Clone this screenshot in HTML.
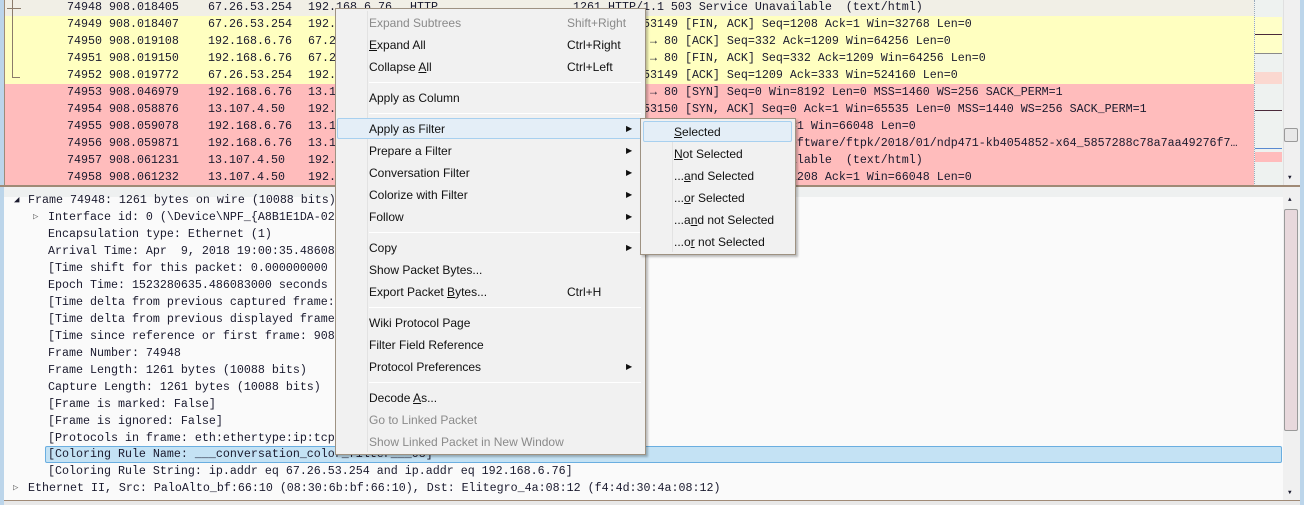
<!DOCTYPE html>
<html><head><meta charset="utf-8"><style>
*{margin:0;padding:0;box-sizing:border-box}
body{width:1304px;height:505px;overflow:hidden;background:#f0f0f0;position:relative;font-family:"Liberation Mono","DejaVu Sans Mono",monospace;font-size:11.67px;color:#1a1a2e}
.abs{position:absolute}
.row{position:absolute;left:5px;width:1249px;height:17px;line-height:17px;white-space:pre}
.row span{position:absolute;top:0}
.y{background:#ffffc0}.r{background:#ffbcbc}.s{background:#f1efe6}
.d{position:absolute;height:17px;line-height:17px;white-space:pre}
.menu{position:absolute;background:#f1f1f1;border:1px solid #9e9282;font-family:"Liberation Sans",sans-serif;font-size:12px;color:#111;box-shadow:2px 2px 2px rgba(0,0,0,.25)}
.mi{position:absolute;left:0;right:0;height:22px;line-height:22px;white-space:nowrap}
.mi .t{position:absolute;left:33px}
.mi .k{position:absolute;left:231px}
.mi .a{position:absolute;left:290px;top:0;font-size:8px}
.dis{color:#8a8a8a}
.sep{position:absolute;left:33px;right:4px;height:1px;background:#dadada;border-bottom:1px solid #fff}
.hl{position:absolute;background:#e4eef7;border:1px solid #a8d0ef;border-radius:2px}
u{text-decoration:underline}
</style></head><body>
<!-- packet list frame -->
<div class="abs" style="left:0;top:0;width:4px;height:505px;background:#bcd5ea"></div>
<div class="abs" style="left:1300px;top:0;width:4px;height:505px;background:#bcd5ea"></div>
<div class="abs" style="left:4px;top:0;width:1px;height:186px;background:#9e8b78"></div>
<div class="row s" style="top:-1px"><span style="left:62px">74948 908.018405</span><span style="left:203px">67.26.53.254</span><span style="left:303px">192.168.6.76</span><span style="left:405px">HTTP</span><span style="left:568px">1261 HTTP/1.1 503 Service Unavailable  (text/html)</span></div>
<div class="row y" style="top:16px"><span style="left:62px">74949 908.018407</span><span style="left:203px">67.26.53.254</span><span style="left:303px">192.168.6.76</span><span style="left:603px">80 → 53149 [FIN, ACK] Seq=1208 Ack=1 Win=32768 Len=0</span></div>
<div class="row y" style="top:33px"><span style="left:62px">74950 908.019108</span><span style="left:203px">192.168.6.76</span><span style="left:303px">67.26.53.254</span><span style="left:603px">53149 → 80 [ACK] Seq=332 Ack=1209 Win=64256 Len=0</span></div>
<div class="row y" style="top:50px"><span style="left:62px">74951 908.019150</span><span style="left:203px">192.168.6.76</span><span style="left:303px">67.26.53.254</span><span style="left:603px">53149 → 80 [FIN, ACK] Seq=332 Ack=1209 Win=64256 Len=0</span></div>
<div class="row y" style="top:67px"><span style="left:62px">74952 908.019772</span><span style="left:203px">67.26.53.254</span><span style="left:303px">192.168.6.76</span><span style="left:603px">80 → 53149 [ACK] Seq=1209 Ack=333 Win=524160 Len=0</span></div>
<div class="row r" style="top:84px"><span style="left:62px">74953 908.046979</span><span style="left:203px">192.168.6.76</span><span style="left:303px">13.107.4.50</span><span style="left:603px">53150 → 80 [SYN] Seq=0 Win=8192 Len=0 MSS=1460 WS=256 SACK_PERM=1</span></div>
<div class="row r" style="top:101px"><span style="left:62px">74954 908.058876</span><span style="left:203px">13.107.4.50</span><span style="left:303px">192.168.6.76</span><span style="left:603px">80 → 53150 [SYN, ACK] Seq=0 Ack=1 Win=65535 Len=0 MSS=1440 WS=256 SACK_PERM=1</span></div>
<div class="row r" style="top:118px"><span style="left:62px">74955 908.059078</span><span style="left:203px">192.168.6.76</span><span style="left:303px">13.107.4.50</span><span style="left:603px">53150 → 80 [ACK] Seq=1 Ack=1 Win=66048 Len=0</span></div>
<div class="row r" style="top:135px"><span style="left:62px">74956 908.059871</span><span style="left:203px">192.168.6.76</span><span style="left:303px">13.107.4.50</span><span style="left:603px">GET /d/msdownload/update/software/ftpk/2018/01/ndp471-kb4054852-x64_5857288c78a7aa49276f7…</span></div>
<div class="row r" style="top:152px"><span style="left:62px">74957 908.061231</span><span style="left:203px">13.107.4.50</span><span style="left:303px">192.168.6.76</span><span style="left:603px">HTTP/1.1 503 Service Unavailable  (text/html)</span></div>
<div class="row r" style="top:169px"><span style="left:62px">74958 908.061232</span><span style="left:203px">13.107.4.50</span><span style="left:303px">192.168.6.76</span><span style="left:603px">80 → 53150 [FIN, ACK] Seq=1208 Ack=1 Win=66048 Len=0</span></div>
<!-- tree line -->
<div class="abs" style="left:12px;top:0;width:1px;height:77px;background:#8b7b6b"></div>
<div class="abs" style="left:12px;top:77px;width:8px;height:1px;background:#8b7b6b"></div>
<div class="abs" style="left:7px;top:8px;width:14px;height:1px;background:#8b7b6b"></div>
<!-- minimap + scrollbar -->
<div class="abs" style="left:1254px;top:0;width:29px;height:186px;background:#eef2f0;border-left:1px dotted #9ab"></div>
<div class="abs" style="left:1255px;top:17px;width:27px;height:36px;background:#ffffc8"></div>
<div class="abs" style="left:1255px;top:34px;width:27px;height:1px;background:#4a2a3a"></div>
<div class="abs" style="left:1255px;top:53px;width:27px;height:1px;background:#8a8a8a"></div>
<div class="abs" style="left:1255px;top:72px;width:27px;height:12px;background:#fbd8d0"></div>
<div class="abs" style="left:1255px;top:110px;width:27px;height:1px;background:#4a2a3a"></div>
<div class="abs" style="left:1255px;top:148px;width:27px;height:1px;background:#5a8ad0"></div>
<div class="abs" style="left:1255px;top:152px;width:27px;height:10px;background:#ffbcbc"></div>
<div class="abs" style="left:1283px;top:0;width:17px;height:186px;background:#f0f0f0;border-left:1px solid #e0e0e0"></div>
<div class="abs" style="left:1284px;top:128px;width:14px;height:14px;border:1px solid #9a9a9a;border-radius:2px;background:#e8e8e8"></div>
<div class="abs" style="left:1288px;top:174px;font-size:6px">▼</div>
<div class="abs" style="left:0;top:185px;width:1300px;height:2px;background:#a08a76"></div>
<!-- detail pane -->
<div class="abs" style="left:4px;top:190px;width:1279px;height:310px;background:#fafafa;border-top:1px solid #d8d8d8"></div>
<div class="abs" style="left:4px;top:190px;width:1279px;height:7px;background:#eef0f0"></div>
<div class="abs" style="left:1283px;top:190px;width:17px;height:310px;background:#f0f0f0"></div>
<div class="abs" style="left:1284px;top:209px;width:14px;height:222px;border:1px solid #9a9a9a;border-radius:2px;background:#e8d8dc"></div>
<div class="abs" style="left:1288px;top:196px;font-size:6px">▲</div>
<div class="abs" style="left:1288px;top:489px;font-size:6px">▼</div>
<div class="abs" style="left:4px;top:500px;width:1296px;height:5px;background:#e8e8e8;border-top:1px solid #a08a76"></div>
<div class="abs" style="left:45px;top:446px;width:1237px;height:17px;background:#c4e2f4;border:1px solid #6aaee0;border-radius:2px"></div>
<div class="d" style="left:14px;top:192px;font-size:9px">◢</div>
<div class="d" style="left:28px;top:192px">Frame 74948: 1261 bytes on wire (10088 bits)</div>
<div class="d" style="left:33px;top:209px;font-size:9px;color:#666">▷</div>
<div class="d" style="left:48px;top:209px">Interface id: 0 (\Device\NPF_{A8B1E1DA-02</div>
<div class="d" style="left:48px;top:226px">Encapsulation type: Ethernet (1)</div>
<div class="d" style="left:48px;top:243px">Arrival Time: Apr  9, 2018 19:00:35.48608</div>
<div class="d" style="left:48px;top:260px">[Time shift for this packet: 0.000000000</div>
<div class="d" style="left:48px;top:277px">Epoch Time: 1523280635.486083000 seconds</div>
<div class="d" style="left:48px;top:294px">[Time delta from previous captured frame:</div>
<div class="d" style="left:48px;top:311px">[Time delta from previous displayed frame</div>
<div class="d" style="left:48px;top:328px">[Time since reference or first frame: 908</div>
<div class="d" style="left:48px;top:345px">Frame Number: 74948</div>
<div class="d" style="left:48px;top:362px">Frame Length: 1261 bytes (10088 bits)</div>
<div class="d" style="left:48px;top:379px">Capture Length: 1261 bytes (10088 bits)</div>
<div class="d" style="left:48px;top:396px">[Frame is marked: False]</div>
<div class="d" style="left:48px;top:413px">[Frame is ignored: False]</div>
<div class="d" style="left:48px;top:430px">[Protocols in frame: eth:ethertype:ip:tcp</div>
<div class="d" style="left:48px;top:446px">[Coloring Rule Name: ___conversation_color_filter___08]</div>
<div class="d" style="left:48px;top:463px">[Coloring Rule String: ip.addr eq 67.26.53.254 and ip.addr eq 192.168.6.76]</div>
<div class="d" style="left:13px;top:480px;font-size:9px;color:#666">▷</div>
<div class="d" style="left:28px;top:480px">Ethernet II, Src: PaloAlto_bf:66:10 (08:30:6b:bf:66:10), Dst: Elitegro_4a:08:12 (f4:4d:30:4a:08:12)</div>
<!-- main menu -->
<div class="menu" style="left:335px;top:8px;width:311px;height:447px">
<div class="abs" style="left:31px;top:2px;width:1px;height:441px;background:#e2e2e2"></div>
<div class="hl" style="left:1px;top:109px;width:307px;height:21px"></div>
<div class="mi dis" style="top:3px"><span class="t">Expand Subtrees</span><span class="k">Shift+Right</span></div>
<div class="mi" style="top:25px"><span class="t"><u>E</u>xpand All</span><span class="k">Ctrl+Right</span></div>
<div class="mi" style="top:47px"><span class="t">Collapse <u>A</u>ll</span><span class="k">Ctrl+Left</span></div>
<div class="sep" style="top:73px"></div>
<div class="mi" style="top:78px"><span class="t">Apply as Column</span></div>
<div class="sep" style="top:104px"></div>
<div class="mi" style="top:109px"><span class="t">Apply as Filter</span><span class="a">▶</span></div>
<div class="mi" style="top:131px"><span class="t">Prepare a Filter</span><span class="a">▶</span></div>
<div class="mi" style="top:153px"><span class="t">Conversation Filter</span><span class="a">▶</span></div>
<div class="mi" style="top:175px"><span class="t">Colorize with Filter</span><span class="a">▶</span></div>
<div class="mi" style="top:197px"><span class="t">Follow</span><span class="a">▶</span></div>
<div class="sep" style="top:223px"></div>
<div class="mi" style="top:228px"><span class="t">Copy</span><span class="a">▶</span></div>
<div class="mi" style="top:250px"><span class="t">Show Packet Bytes...</span></div>
<div class="mi" style="top:272px"><span class="t">Export Packet <u>B</u>ytes...</span><span class="k">Ctrl+H</span></div>
<div class="sep" style="top:298px"></div>
<div class="mi" style="top:303px"><span class="t">Wiki Protocol Page</span></div>
<div class="mi" style="top:325px"><span class="t">Filter Field Reference</span></div>
<div class="mi" style="top:347px"><span class="t">Protocol Preferences</span><span class="a">▶</span></div>
<div class="sep" style="top:373px"></div>
<div class="mi" style="top:378px"><span class="t">Decode <u>A</u>s...</span></div>
<div class="mi dis" style="top:400px"><span class="t">Go to Linked Packet</span></div>
<div class="mi dis" style="top:422px"><span class="t">Show Linked Packet in New Window</span></div>
</div>
<!-- submenu -->
<div class="menu" style="left:640px;top:118px;width:156px;height:137px">
<div class="abs" style="left:31px;top:2px;width:1px;height:131px;background:#e2e2e2"></div>
<div class="hl" style="left:2px;top:2px;width:149px;height:21px"></div>
<div class="mi" style="top:2px"><span class="t"><u>S</u>elected</span></div>
<div class="mi" style="top:24px"><span class="t"><u>N</u>ot Selected</span></div>
<div class="mi" style="top:46px"><span class="t">...<u>a</u>nd Selected</span></div>
<div class="mi" style="top:68px"><span class="t">...<u>o</u>r Selected</span></div>
<div class="mi" style="top:90px"><span class="t">...a<u>n</u>d not Selected</span></div>
<div class="mi" style="top:112px"><span class="t">...o<u>r</u> not Selected</span></div>
</div>
</body></html>
